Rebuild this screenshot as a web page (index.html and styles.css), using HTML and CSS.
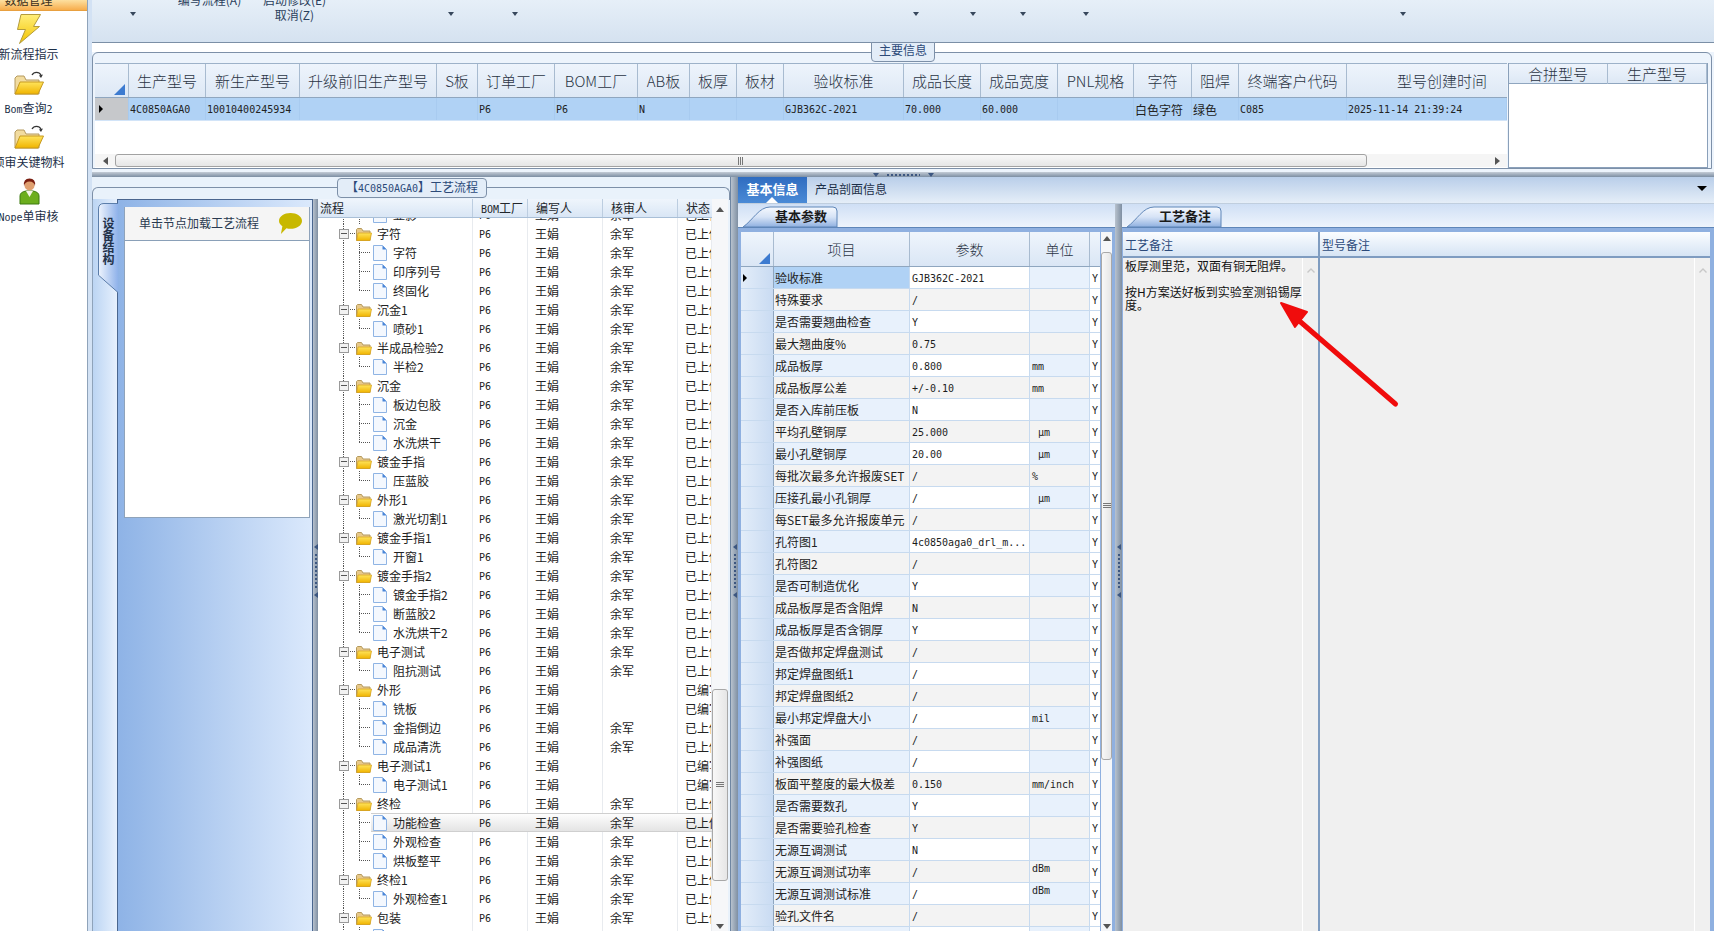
FILE: index.html
```html
<!DOCTYPE html>
<html lang="zh">
<head>
<meta charset="utf-8">
<title>工艺流程</title>
<link rel="stylesheet" href="styles.css">
</head>
<body>
<svg class="defs" aria-hidden="true">
  <defs>
    <linearGradient id="gBolt" x1="0" y1="0" x2="0" y2="1"><stop offset="0" stop-color="#ffee7a"/><stop offset="1" stop-color="#f3c400"/></linearGradient>
    <linearGradient id="gFold" x1="0" y1="0" x2="0" y2="1"><stop offset="0" stop-color="#ffe45c"/><stop offset="1" stop-color="#f0b400"/></linearGradient>
    <linearGradient id="gTab" x1="0" y1="0" x2="0" y2="1"><stop offset="0" stop-color="#f6f9fe"/><stop offset=".5" stop-color="#d6e3f6"/><stop offset="1" stop-color="#8fb0e0"/></linearGradient>
    <linearGradient id="gVtab" x1="0" y1="0" x2="1" y2="0"><stop offset="0" stop-color="#eef4fd"/><stop offset="1" stop-color="#8fb2ea"/></linearGradient>
    <symbol id="folder" viewBox="0 0 16 16"><path d="M.5 3.500V14.500H14V5H7L5.500 2.500H1.500Z" fill="#e8c98a" stroke="#b59a5e"/><path d="M2 7H15.500L14 14.500H.8Z" fill="url(#gFold)" stroke="#d9a520" stroke-width=".8"/></symbol>
    <symbol id="file" viewBox="0 0 14 16"><path d="M.5.5H9.500L13.500 4.500V15.500H.5Z" fill="#f4f8fe" stroke="#8fb4e4"/><path d="M9.500.5V4.500H13.500Z" fill="#4a86d8"/></symbol>
    <symbol id="bigfolder" viewBox="0 0 30 24"><path d="M1 7V23H25V9H12L10 5H3Z" fill="#f2dca0" stroke="#b59a5e"/><path d="M6 11H29.500L24 23H1Z" fill="url(#gFold)" stroke="#c79a20"/><path d="M18 4C20 .5 25 .5 27 4" fill="none" stroke="#333" stroke-width="1.300"/><path d="M25 4.500L29 3.500 27 7Z" fill="#333"/></symbol>
    <symbol id="tabshape" viewBox="0 0 95 21" preserveAspectRatio="none"><path d="M0 21C10 14 16 1 27 1H90Q94 1 94 5V21Z" fill="url(#gTab)" stroke="#5f86b8"/></symbol>
  </defs>
</svg>

<div class="app">
  <aside class="side">
    <div class="side-head"><span>数据管理</span></div>
    <div class="item">
      <div class="item-ic"><svg class="ic-bolt" viewBox="0 0 24 30"><path d="M4 .5H23.500L16.500 12.500H22.500L2.500 29.500 8.500 15.500H.5Z" fill="url(#gBolt)" stroke="#b39b3c"/></svg></div>
      <div class="item-t">新流程指示</div>
    </div>
    <div class="item">
      <div class="item-ic"><svg class="ic-fold"><use href="#bigfolder"/></svg></div>
      <div class="item-t"><span class="m">Bom</span>查询<span class="m">2</span></div>
    </div>
    <div class="item">
      <div class="item-ic"><svg class="ic-fold"><use href="#bigfolder"/></svg></div>
      <div class="item-t">预审关键物料</div>
    </div>
    <div class="item">
      <div class="item-ic"><svg class="ic-user" viewBox="0 0 21 27"><path d="M1 26V18Q1 14 7 13H14Q20 14 20 18V26Z" fill="#6cae1e" stroke="#3d7a10"/><path d="M7 13L10.500 19 14 13Z" fill="#f4f4e8"/><circle cx="10.500" cy="7.500" r="5" fill="#e0a070"/><path d="M5 8Q4 .5 10.500 .5T16 8Q15 3.500 10.500 3.500T5 8Z" fill="#7a1e10"/></svg></div>
      <div class="item-t"><span class="m">Nope</span>单审核</div>
    </div>
  </aside>

  <div class="frame">
    <main class="main">
      <div class="ribbon">
        <span></span><i class="tri-s"></i><span></span>
        <div class="rb-t"><div>编写流程(A)</div></div>
        <span></span>
        <div class="rb-t"><div>启动修改(E)</div><div>取消(Z)</div></div>
        <span></span><i class="tri-s"></i><span></span><i class="tri-s"></i><span></span><i class="tri-s"></i><span></span><i class="tri-s"></i><span></span><i class="tri-s"></i><span></span><i class="tri-s"></i><span></span><i class="tri-s"></i>
      </div>

      <section class="topgroup">
        <div class="grp-title">主要信息</div>
        <div class="topgrids">
          <div class="tg">
            <div class="tg-row tg-head">
              <div class="corner"><i class="corner-tri"></i></div>
              <div>生产型号</div><div>新生产型号</div><div>升级前旧生产型号</div><div>S板</div><div>订单工厂</div><div>BOM工厂</div><div>AB板</div><div>板厚</div><div>板材</div><div>验收标准</div><div>成品长度</div><div>成品宽度</div><div>PNL规格</div><div>字符</div><div>阻焊</div><div>终端客户代码</div><div class="h-last">型号创建时间</div>
            </div>
            <div class="tg-row tg-data">
              <div class="sel-gray"><i class="tri-r"></i></div>
              <div class="m">4C0850AGA0</div><div class="m">10010400245934</div><div></div><div></div><div class="m">P6</div><div class="m">P6</div><div class="m">N</div><div></div><div></div><div class="m">GJB362C-2021</div><div class="m">70.000</div><div class="m">60.000</div><div></div><div>白色字符</div><div>绿色</div><div class="m">C085</div><div class="m">2025-11-14 21:39:24</div>
            </div>
            <div class="tg-fill"></div>
            <div class="hbar">
              <div class="hb-btn"><i class="tri-l"></i></div>
              <div class="hb-thumb"><span class="grip-v"></span></div>
              <div class="hb-track"></div>
              <div class="hb-btn"><i class="tri-rg"></i></div>
            </div>
          </div>
          <div class="mg">
            <div class="mg-head"><div>合拼型号</div><div>生产型号</div></div>
          </div>
        </div>
      </section>

      <div class="hsplit"><i class="tri-d"></i><span class="dots-h"></span><i class="tri-d"></i></div>

      <div class="lower">
        <section class="leftgroup">
          <div class="gbar"><div class="gbar-title">【<span class="m">4C0850AGA0</span>】工艺流程</div></div>
          <div class="lg-body">
            <div class="vtabs">
              <div class="vtab">
                <svg class="vtab-shape" viewBox="0 0 20 91" preserveAspectRatio="none"><path d="M20 .5H6Q.5 .5 .5 6V73L20 90.500" fill="url(#gVtab)" stroke="#5a7ca8"/></svg>
                <span class="vtab-t">设备结构</span>
              </div>
            </div>
            <div class="sidepanel">
              <div class="sp-white">
                <div class="sp-head">
                  <span>单击节点加载工艺流程</span>
                  <svg class="bubble" viewBox="0 0 24 20" preserveAspectRatio="none"><path d="M12 0C18.600 0 24 3.300 24 7.500S18.600 15 12 15C10.500 15 9 14.800 7.800 14.500L2 20 3.500 12.500C1.300 11 0 9.400 0 7.500 0 3.300 5.400 0 12 0Z" fill="#c8b800"/></svg>
                </div>
              </div>
            </div>
            <div class="vsplit vs-a"><i class="tri-vl"></i><span class="dots-v"></span><i class="tri-vl"></i></div>
            <div class="tree">
              <div class="tree-main">
                <div class="th">
                  <div class="th-n">流程</div><div><span class="m">BOM</span>工厂</div><div>编写人</div><div>核审人</div><div>状态</div>
                </div>
                <div class="tb">
                  <div class="tbi">
                    <div class="tr"><div class="n k"><svg class="fi"><use href="#file"/></svg>显影</div><span class="m">P6</span><span>王娟</span><span>余军</span><span>已上传</span></div>
                    <div class="tr"><div class="n f"><i class="box"></i><svg class="fo"><use href="#folder"/></svg>字符</div><span class="m">P6</span><span>王娟</span><span>余军</span><span>已上传</span></div>
                    <div class="tr"><div class="n k"><svg class="fi"><use href="#file"/></svg>字符</div><span class="m">P6</span><span>王娟</span><span>余军</span><span>已上传</span></div>
                    <div class="tr"><div class="n k"><svg class="fi"><use href="#file"/></svg>印序列号</div><span class="m">P6</span><span>王娟</span><span>余军</span><span>已上传</span></div>
                    <div class="tr"><div class="n k l"><svg class="fi"><use href="#file"/></svg>终固化</div><span class="m">P6</span><span>王娟</span><span>余军</span><span>已上传</span></div>
                    <div class="tr"><div class="n f"><i class="box"></i><svg class="fo"><use href="#folder"/></svg>沉金1</div><span class="m">P6</span><span>王娟</span><span>余军</span><span>已上传</span></div>
                    <div class="tr"><div class="n k l"><svg class="fi"><use href="#file"/></svg>喷砂1</div><span class="m">P6</span><span>王娟</span><span>余军</span><span>已上传</span></div>
                    <div class="tr"><div class="n f"><i class="box"></i><svg class="fo"><use href="#folder"/></svg>半成品检验2</div><span class="m">P6</span><span>王娟</span><span>余军</span><span>已上传</span></div>
                    <div class="tr"><div class="n k l"><svg class="fi"><use href="#file"/></svg>半检2</div><span class="m">P6</span><span>王娟</span><span>余军</span><span>已上传</span></div>
                    <div class="tr"><div class="n f"><i class="box"></i><svg class="fo"><use href="#folder"/></svg>沉金</div><span class="m">P6</span><span>王娟</span><span>余军</span><span>已上传</span></div>
                    <div class="tr"><div class="n k"><svg class="fi"><use href="#file"/></svg>板边包胶</div><span class="m">P6</span><span>王娟</span><span>余军</span><span>已上传</span></div>
                    <div class="tr"><div class="n k"><svg class="fi"><use href="#file"/></svg>沉金</div><span class="m">P6</span><span>王娟</span><span>余军</span><span>已上传</span></div>
                    <div class="tr"><div class="n k l"><svg class="fi"><use href="#file"/></svg>水洗烘干</div><span class="m">P6</span><span>王娟</span><span>余军</span><span>已上传</span></div>
                    <div class="tr"><div class="n f"><i class="box"></i><svg class="fo"><use href="#folder"/></svg>镀金手指</div><span class="m">P6</span><span>王娟</span><span>余军</span><span>已上传</span></div>
                    <div class="tr"><div class="n k l"><svg class="fi"><use href="#file"/></svg>压蓝胶</div><span class="m">P6</span><span>王娟</span><span>余军</span><span>已上传</span></div>
                    <div class="tr"><div class="n f"><i class="box"></i><svg class="fo"><use href="#folder"/></svg>外形1</div><span class="m">P6</span><span>王娟</span><span>余军</span><span>已上传</span></div>
                    <div class="tr"><div class="n k l"><svg class="fi"><use href="#file"/></svg>激光切割1</div><span class="m">P6</span><span>王娟</span><span>余军</span><span>已上传</span></div>
                    <div class="tr"><div class="n f"><i class="box"></i><svg class="fo"><use href="#folder"/></svg>镀金手指1</div><span class="m">P6</span><span>王娟</span><span>余军</span><span>已上传</span></div>
                    <div class="tr"><div class="n k l"><svg class="fi"><use href="#file"/></svg>开窗1</div><span class="m">P6</span><span>王娟</span><span>余军</span><span>已上传</span></div>
                    <div class="tr"><div class="n f"><i class="box"></i><svg class="fo"><use href="#folder"/></svg>镀金手指2</div><span class="m">P6</span><span>王娟</span><span>余军</span><span>已上传</span></div>
                    <div class="tr"><div class="n k"><svg class="fi"><use href="#file"/></svg>镀金手指2</div><span class="m">P6</span><span>王娟</span><span>余军</span><span>已上传</span></div>
                    <div class="tr"><div class="n k"><svg class="fi"><use href="#file"/></svg>断蓝胶2</div><span class="m">P6</span><span>王娟</span><span>余军</span><span>已上传</span></div>
                    <div class="tr"><div class="n k l"><svg class="fi"><use href="#file"/></svg>水洗烘干2</div><span class="m">P6</span><span>王娟</span><span>余军</span><span>已上传</span></div>
                    <div class="tr"><div class="n f"><i class="box"></i><svg class="fo"><use href="#folder"/></svg>电子测试</div><span class="m">P6</span><span>王娟</span><span>余军</span><span>已上传</span></div>
                    <div class="tr"><div class="n k l"><svg class="fi"><use href="#file"/></svg>阻抗测试</div><span class="m">P6</span><span>王娟</span><span>余军</span><span>已上传</span></div>
                    <div class="tr"><div class="n f"><i class="box"></i><svg class="fo"><use href="#folder"/></svg>外形</div><span class="m">P6</span><span>王娟</span><span></span><span>已编写</span></div>
                    <div class="tr"><div class="n k"><svg class="fi"><use href="#file"/></svg>铣板</div><span class="m">P6</span><span>王娟</span><span></span><span>已编写</span></div>
                    <div class="tr"><div class="n k"><svg class="fi"><use href="#file"/></svg>金指倒边</div><span class="m">P6</span><span>王娟</span><span>余军</span><span>已上传</span></div>
                    <div class="tr"><div class="n k l"><svg class="fi"><use href="#file"/></svg>成品清洗</div><span class="m">P6</span><span>王娟</span><span>余军</span><span>已上传</span></div>
                    <div class="tr"><div class="n f"><i class="box"></i><svg class="fo"><use href="#folder"/></svg>电子测试1</div><span class="m">P6</span><span>王娟</span><span></span><span>已编写</span></div>
                    <div class="tr"><div class="n k l"><svg class="fi"><use href="#file"/></svg>电子测试1</div><span class="m">P6</span><span>王娟</span><span></span><span>已编写</span></div>
                    <div class="tr"><div class="n f"><i class="box"></i><svg class="fo"><use href="#folder"/></svg>终检</div><span class="m">P6</span><span>王娟</span><span>余军</span><span>已上传</span></div>
                    <div class="tr hl"><div class="n k"><svg class="fi"><use href="#file"/></svg>功能检查</div><span class="m">P6</span><span>王娟</span><span>余军</span><span>已上传</span></div>
                    <div class="tr"><div class="n k"><svg class="fi"><use href="#file"/></svg>外观检查</div><span class="m">P6</span><span>王娟</span><span>余军</span><span>已上传</span></div>
                    <div class="tr"><div class="n k l"><svg class="fi"><use href="#file"/></svg>烘板整平</div><span class="m">P6</span><span>王娟</span><span>余军</span><span>已上传</span></div>
                    <div class="tr"><div class="n f"><i class="box"></i><svg class="fo"><use href="#folder"/></svg>终检1</div><span class="m">P6</span><span>王娟</span><span>余军</span><span>已上传</span></div>
                    <div class="tr"><div class="n k l"><svg class="fi"><use href="#file"/></svg>外观检查1</div><span class="m">P6</span><span>王娟</span><span>余军</span><span>已上传</span></div>
                    <div class="tr"><div class="n f"><i class="box"></i><svg class="fo"><use href="#folder"/></svg>包装</div><span class="m">P6</span><span>王娟</span><span>余军</span><span>已上传</span></div>
                    <div class="tr"><div class="n k"><svg class="fi"><use href="#file"/></svg>包装</div><span class="m">P6</span><span>王娟</span><span>余军</span><span>已上传</span></div>
                  </div>
                </div>
              </div>
              <div class="vbar vbar-tree">
                <i class="tri-u"></i>
                <div class="vb-thumb"><span class="grip-h"></span></div>
                <i class="tri-dn"></i>
              </div>
            </div>
          </div>
        </section>

        <div class="vsplit vs-b"><i class="tri-vl"></i><span class="dots-v"></span><i class="tri-vl"></i></div>

        <section class="rightarea">
          <div class="rtabs">
            <div class="rtab-on">基本信息</div>
            <div class="rtab">产品剖面信息</div>
            <i class="tri-menu"></i>
          </div>
          <div class="rpanels">
            <div class="subpanel sp-params">
              <div class="strip"><div class="stab"><svg class="stab-shape"><use href="#tabshape"/></svg><span>基本参数</span></div></div>
              <div class="pbody pb-a">
                <div class="pgrid">
                  <div class="ph">
                    <div class="corner"><i class="corner-tri"></i></div><div>项目</div><div>参数</div><div>单位</div><div></div>
                  </div>
                  <div class="pr on"><div class="ps"><i class="tri-r"></i></div><div>验收标准</div><div class="m">GJB362C-2021</div><div></div><div class="m">Y</div></div>
                  <div class="pr"><div class="ps"></div><div>特殊要求</div><div class="m">/</div><div></div><div class="m">Y</div></div>
                  <div class="pr"><div class="ps"></div><div>是否需要翘曲检查</div><div class="m">Y</div><div></div><div class="m">Y</div></div>
                  <div class="pr"><div class="ps"></div><div>最大翘曲度%</div><div class="m">0.75</div><div></div><div class="m">Y</div></div>
                  <div class="pr"><div class="ps"></div><div>成品板厚</div><div class="m">0.800</div><div class="m">mm</div><div class="m">Y</div></div>
                  <div class="pr"><div class="ps"></div><div>成品板厚公差</div><div class="m">+/-0.10</div><div class="m">mm</div><div class="m">Y</div></div>
                  <div class="pr"><div class="ps"></div><div>是否入库前压板</div><div class="m">N</div><div></div><div class="m">Y</div></div>
                  <div class="pr"><div class="ps"></div><div>平均孔壁铜厚</div><div class="m">25.000</div><div class="m">&nbsp;μm</div><div class="m">Y</div></div>
                  <div class="pr"><div class="ps"></div><div>最小孔壁铜厚</div><div class="m">20.00</div><div class="m">&nbsp;μm</div><div class="m">Y</div></div>
                  <div class="pr"><div class="ps"></div><div>每批次最多允许报废SET</div><div class="m">/</div><div class="m">%</div><div class="m">Y</div></div>
                  <div class="pr"><div class="ps"></div><div>压接孔最小孔铜厚</div><div class="m">/</div><div class="m">&nbsp;μm</div><div class="m">Y</div></div>
                  <div class="pr"><div class="ps"></div><div>每SET最多允许报废单元</div><div class="m">/</div><div></div><div class="m">Y</div></div>
                  <div class="pr"><div class="ps"></div><div>孔符图1</div><div class="m">4c0850aga0_drl_m...</div><div></div><div class="m">Y</div></div>
                  <div class="pr"><div class="ps"></div><div>孔符图2</div><div class="m">/</div><div></div><div class="m">Y</div></div>
                  <div class="pr"><div class="ps"></div><div>是否可制造优化</div><div class="m">Y</div><div></div><div class="m">Y</div></div>
                  <div class="pr"><div class="ps"></div><div>成品板厚是否含阻焊</div><div class="m">N</div><div></div><div class="m">Y</div></div>
                  <div class="pr"><div class="ps"></div><div>成品板厚是否含铜厚</div><div class="m">Y</div><div></div><div class="m">Y</div></div>
                  <div class="pr"><div class="ps"></div><div>是否做邦定焊盘测试</div><div class="m">/</div><div></div><div class="m">Y</div></div>
                  <div class="pr"><div class="ps"></div><div>邦定焊盘图纸1</div><div class="m">/</div><div></div><div class="m">Y</div></div>
                  <div class="pr"><div class="ps"></div><div>邦定焊盘图纸2</div><div class="m">/</div><div></div><div class="m">Y</div></div>
                  <div class="pr"><div class="ps"></div><div>最小邦定焊盘大小</div><div class="m">/</div><div class="m">mil</div><div class="m">Y</div></div>
                  <div class="pr"><div class="ps"></div><div>补强面</div><div class="m">/</div><div></div><div class="m">Y</div></div>
                  <div class="pr"><div class="ps"></div><div>补强图纸</div><div class="m">/</div><div></div><div class="m">Y</div></div>
                  <div class="pr"><div class="ps"></div><div>板面平整度的最大极差</div><div class="m">0.150</div><div class="m">mm/inch</div><div class="m">Y</div></div>
                  <div class="pr"><div class="ps"></div><div>是否需要数孔</div><div class="m">Y</div><div></div><div class="m">Y</div></div>
                  <div class="pr"><div class="ps"></div><div>是否需要验孔检查</div><div class="m">Y</div><div></div><div class="m">Y</div></div>
                  <div class="pr"><div class="ps"></div><div>无源互调测试</div><div class="m">N</div><div></div><div class="m">Y</div></div>
                  <div class="pr"><div class="ps"></div><div>无源互调测试功率</div><div class="m">/</div><div class="m up">dBm</div><div class="m">Y</div></div>
                  <div class="pr"><div class="ps"></div><div>无源互调测试标准</div><div class="m">/</div><div class="m up">dBm</div><div class="m">Y</div></div>
                  <div class="pr"><div class="ps"></div><div>验孔文件名</div><div class="m">/</div><div></div><div class="m">Y</div></div>
                  <div class="pr"><div class="ps"></div><div></div><div></div><div></div><div></div></div>
                </div>
                <div class="vbar vbar-param">
                  <i class="tri-u"></i>
                  <div class="vb-thumb"><span class="grip-h"></span></div>
                  <i class="tri-dn"></i>
                </div>
              </div>
            </div>

            <div class="vsplit vs-c"><i class="tri-vl"></i><span class="dots-v"></span><i class="tri-vl"></i></div>

            <div class="subpanel sp-notes">
              <div class="strip"><div class="stab"><svg class="stab-shape"><use href="#tabshape"/></svg><span>工艺备注</span></div></div>
              <div class="pbody pb-b">
                <div class="notes">
                  <div class="note-col nc-a">
                    <div class="note-h">工艺备注</div>
                    <div class="note-b">
                      <div class="note-t">板厚测里范，双面有铜无阻焊。<br><br>按H方案送好板到实验室测铅锡厚度。</div>
                      <div class="note-s"><svg class="chev" viewBox="0 0 8 5"><path d="M.5 4.500L4 1 7.500 4.500" fill="none" stroke="#c8c8c8" stroke-width="1.400"/></svg></div>
                    </div>
                  </div>
                  <div class="note-col nc-b">
                    <div class="note-h">型号备注</div>
                    <div class="note-b">
                      <div class="note-t"></div>
                      <div class="note-s"><svg class="chev" viewBox="0 0 8 5"><path d="M.5 4.500L4 1 7.500 4.500" fill="none" stroke="#c8c8c8" stroke-width="1.400"/></svg></div>
                    </div>
                  </div>
                </div>
              </div>
            </div>
          </div>
        </section>
      </div>
    </main>
  </div>

  <svg class="annot" viewBox="0 0 1714 931" aria-hidden="true">
    <path d="M1395.500 404L1296 318" fill="none" stroke="#f00c0c" stroke-width="5" stroke-linecap="round"/>
    <path d="M1281 303L1307 312 1295 327Z" fill="#f00c0c" stroke="#f00c0c" stroke-width="2" stroke-linejoin="round"/>
  </svg>
</div>
</body>
</html>
```

FILE: styles.css
```css
* { box-sizing: border-box; }
html, body { margin: 0; padding: 0; height: 100%; overflow: hidden; }
body {
  font-family: "Noto Sans CJK SC", "Noto Sans", sans-serif;
  font-size: 12px;
  color: #1c1c1c;
  background: #d3e2f4;
}
i { display: block; font-style: normal; flex: none; }
.m { font-family: "DejaVu Sans Mono", "Liberation Mono", "Noto Sans CJK SC", monospace; font-size: 10px; }
.defs { position: absolute; width: 0; height: 0; }

.app { position: relative; display: flex; width: 1714px; height: 931px; overflow: hidden; }

/* sidebar */
.side { flex: none; width: 88px; background: #fff; border-right: 1px solid #8fa3ba; overflow: hidden; }
.side-head {
  height: 11px; overflow: hidden; text-align: center; width: 87px;
  background: linear-gradient(#fde0a0, #f7ad4c);
  border-bottom: 1px solid #e8a040; padding-right: 30px;
}
.side-head span { display: block; line-height: 14px; margin-top: -7px; color: #3b3020; }
.item { width: 57px; height: 54px; display: flex; flex-direction: column; align-items: center; }
.item-ic { height: 36px; display: flex; align-items: center; justify-content: center; }
.item-t { height: 14px; line-height: 14px; white-space: nowrap; color: #1c2f48; }
.ic-bolt { width: 24px; height: 30px; margin-left: 1px; }
.ic-fold { width: 30px; height: 24px; }
.ic-user { width: 21px; height: 27px; margin-left: 1px; }

.frame { flex: none; width: 1626px; padding-left: 4px; background: #d3e2f4; }
.main { display: flex; flex-direction: column; width: 1622px; height: 931px; }

/* ribbon */
.ribbon {
  flex: none; height: 43px; overflow: hidden;
  display: grid;
  grid-template-columns: 38px 7px 39px 67px 19px 65px 121px 7px 57px 7px 394px 7px 50px 7px 43px 7px 56px 7px 310px 7px;
  background: linear-gradient(#e6eff8, #d5e2f0);
  border-bottom: 1px solid #7b8fa6;
}
.tri-s { width: 0; height: 0; margin-top: 12px; border: 3.5px solid transparent; border-top: 4px solid #37475c; border-bottom: 0; }
.rb-t { margin-top: -8px; text-align: center; line-height: 15px; color: #2b3f5c; white-space: nowrap; }

/* top group */
.topgroup { flex: none; position: relative; height: 129px; padding: 20px 0 0 3px; background: linear-gradient(#fff 0 9px, #edf4fc 9px); }
.topgroup::before {
  content: ""; position: absolute; left: 0; right: 2px; top: 9px; bottom: 3px;
  border: 1px solid #7d90a8; border-radius: 6px 6px 0 0;
}
.grp-title {
  position: absolute; left: 779px; top: -1px; width: 64px; height: 20px; line-height: 14px; text-align: center;
  color: #2c4a78; background: #e3edf8; border: 1px solid #7d90a8; border-radius: 0 0 4px 4px;
}
.topgrids { position: relative; display: flex; gap: 1px; height: 105px; }
.tg { width: 1412px; height: 105px; background: #fff; display: flex; flex-direction: column; }
.tg-row {
  display: grid;
  grid-template-columns: 34px 77px 94px 137px 41px 77px 83px 52px 47px 47px 120px 77px 77px 76px 58px 47px 108px 160px;
}
.tg-head { height: 35px; background: linear-gradient(#eef4fc, #dde8f5); border-top: 1px solid #9db2c9; border-bottom: 1px solid #8fa6bf; }
.tg-head > div {
  border-right: 1px solid #a8bbd0; text-align: center; font-size: 15px; line-height: 34px; color: #2a3444; white-space: nowrap; overflow: hidden;
  font-weight: 300;
}
.tg-head .h-last { padding-left: 30px; border-right: 0; }
.tg-head .corner, .ph .corner { position: relative; }
.corner-tri { position: absolute; right: 3px; bottom: 2px; width: 0; height: 0; border-left: 11px solid transparent; border-bottom: 11px solid #3d7bd0; }
.tg-data { height: 23px; background: #b0d2f5; line-height: 24px; border-bottom: 1px solid #d2e4f8; }
.tg-data > div { padding-left: 1px; border-right: 1px solid #a8cbf0; white-space: nowrap; overflow: hidden; color: #222; }
.sel-gray { background: #c6c8cb; display: flex; align-items: center; padding-left: 3px !important; }
.tri-r { width: 0; height: 0; border: 4px solid transparent; border-left: 4px solid #000; border-right: 0; margin-left: 1px; }
.tg-fill { flex: 1; }
.hbar { flex: none; height: 13px; margin-bottom: 1px; display: flex; background: #f5f5f5; align-items: center; }
.hb-btn { flex: none; width: 20px; height: 13px; display: flex; align-items: center; justify-content: center; }
.tri-l { width: 0; height: 0; border: 4px solid transparent; border-right: 5px solid #555; border-left: 0; }
.tri-rg { width: 0; height: 0; border: 4px solid transparent; border-left: 5px solid #555; border-right: 0; }
.hb-thumb {
  flex: none; width: 1252px; height: 13px; display: flex; align-items: center; justify-content: center;
  background: linear-gradient(#f8f8f8, #e6e6e6); border: 1px solid #a2a2a2; border-radius: 3px;
}
.grip-v { width: 6px; height: 8px; background: repeating-linear-gradient(90deg, #777 0 1px, transparent 1px 2px); }
.hb-track { flex: 1; }
.mg { width: 200px; height: 105px; background: #fff; border-right: 1px solid #8aa0ba; border-bottom: 1px solid #8aa0ba; border-left: 1px solid #8aa0ba; }
.mg-head { height: 21px; display: grid; grid-template-columns: 99px 1fr; background: linear-gradient(#eef4fc, #dde8f5); border-top: 1px solid #9db2c9; border-bottom: 1px solid #8fa6bf; }
.mg-head > div { text-align: center; font-size: 15px; line-height: 20px; font-weight: 300; color: #2a3444; border-right: 1px solid #a8bbd0; }

/* horizontal splitter */
.hsplit {
  flex: none; height: 5px; display: flex; align-items: center; justify-content: center; gap: 4px;
  background: linear-gradient(#c4ccd6, #7c8ea3);
}
.tri-d { width: 0; height: 0; border: 3px solid transparent; border-top: 4px solid #3c5680; border-bottom: 0; }
.dots-h { width: 33px; height: 2px; background: repeating-linear-gradient(90deg, #3c5680 0 2px, transparent 2px 4px); margin: 0 4px; }

.lower { flex: 1; display: flex; min-height: 0; }

/* lower left */
.leftgroup { flex: none; width: 639px; display: flex; flex-direction: column; background: #e9f2fb; border-right: 1px solid #6f86a2; }
.gbar { position: relative; flex: none; height: 22px; padding: 1px 0 0 245px; }
.gbar::before { content: ""; position: absolute; left: 0; right: 0; top: 10px; height: 12px; border: 1px solid #7d90a8; border-bottom: 0; border-radius: 6px 6px 0 0; }
.gbar-title {
  position: relative; width: 150px; height: 20px; line-height: 15px; text-align: center; white-space: nowrap;
  color: #2c4a78; background: #e3edf8; border: 1px solid #7d90a8; border-radius: 4px;
}
.lg-body { flex: 1; display: flex; min-height: 0; }
.vtabs { flex: none; width: 25px; padding: 4px 0 0 5px; background: linear-gradient(90deg, #bcd5f3, #e6f0fd); border-left: 1px solid #8fa3ba; }
.vtab { position: relative; width: 20px; height: 90px; }
.vtab-shape { display: block; width: 20px; height: 90px; }
.vtab-t {
  position: absolute; left: 3px; top: 14px; width: 14px;
  writing-mode: vertical-rl; font-weight: 700; font-size: 12px; line-height: 14px; letter-spacing: .3px; color: #22324a;
}
.sidepanel {
  flex: none; width: 196px; padding: 7px 2px 0 6px;
  background: linear-gradient(90deg, #8eb3e6, #dbe9fc);
  border: 1px solid #4a668f; border-bottom: 0;
}
.sp-white { height: 311px; background: #fff; border: 1px solid #8fa3ba; border-top: 0; }
.sp-head { display: flex; justify-content: space-between; align-items: center; height: 34px; padding: 0 7px 0 14px; background: #f5f5f5; border-bottom: 1px solid #8aa0b8; color: #2a3a50; }
.sp-head span { margin-top: -3px; }
.bubble { width: 23px; height: 21px; }

.vsplit { flex: none; display: flex; flex-direction: column; align-items: center; background: linear-gradient(90deg, #b8c2ce, #7f8fa2); }
.vs-a { width: 5px; padding-top: 345px; }
.vs-b { width: 7px; padding-top: 367px; }
.vs-c { width: 7px; padding-top: 340px; }
.tri-vl { width: 0; height: 0; border: 3px solid transparent; border-right: 4px solid #3c5680; border-left: 0; }
.dots-v { width: 2px; height: 34px; margin: 4px 0; background: repeating-linear-gradient(#3c5680 0 2px, transparent 2px 4px); }

/* tree */
.tree { flex: none; width: 410px; display: flex; background: #fff; }
.tree-main { flex: none; width: 394px; display: flex; flex-direction: column; min-height: 0; overflow: hidden; }
.th, .tr { display: grid; grid-template-columns: 155px 55px 75px 75px 34px; }
.th { flex: none; height: 19px; background: linear-gradient(#eff5fc, #d9e6f5); border-bottom: 1px solid #a9bfd7; }
.th > div { line-height: 18px; padding-left: 8px; border-right: 1px solid #bccde0; overflow: hidden; white-space: nowrap; color: #22262c; }
.th .th-n { padding-left: 2px; }
.th > div:last-child { border-right: 0; }
.tb { flex: 1; overflow: hidden; }
.tbi { margin-top: -13px; }
.tr { height: 19px; line-height: 19px; color: #222; }
.tr > span { padding-left: 7px; border-right: 1px solid #e8ebef; overflow: hidden; white-space: nowrap; }
.tr > span.m { padding-left: 6px; line-height: 21px; }
.n {
  display: flex; align-items: center; white-space: nowrap; overflow: hidden; border-right: 1px solid #e8ebef;
  --dv: repeating-linear-gradient(#555 0 1px, transparent 1px 2px);
  --dh: repeating-linear-gradient(90deg, #555 0 1px, transparent 1px 2px);
}
.n.f {
  padding-left: 21px;
  background: var(--dh) 30px 9px / 8px 1px no-repeat, var(--dv) 25px 0 / 1px 100% no-repeat;
}
.n.k {
  padding-left: 55px;
  background: var(--dh) 41px 9px / 12px 1px no-repeat, var(--dv) 41px 0 / 1px 100% no-repeat, var(--dv) 25px 0 / 1px 100% no-repeat;
}
.n.k.l {
  background: var(--dh) 41px 9px / 12px 1px no-repeat, var(--dv) 41px 0 / 1px 10px no-repeat, var(--dv) 25px 0 / 1px 100% no-repeat;
}
.box {
  position: relative; width: 10px; height: 10px; margin-right: 7px;
  background: linear-gradient(#555, #555) center / 6px 1px no-repeat, #f2f2f2; border: 1px solid #9a9a9a;
}
.fo { flex: none; width: 16px; height: 16px; margin-right: 5px; }
.fi { flex: none; width: 14px; height: 16px; margin-right: 6px; }
.tr.hl > span { background: linear-gradient(#cfcfcf 0 1px, #fdfdfd 1px, #e4e4e4 18px, #cfcfcf 18px); border-right: 0; }
.tr.hl .n.k {
  background: linear-gradient(#cfcfcf 0 1px, #fdfdfd 1px, #e4e4e4 18px, #cfcfcf 18px) 53px 0 / 102px 100% no-repeat,
    var(--dh) 41px 9px / 12px 1px no-repeat, var(--dv) 41px 0 / 1px 100% no-repeat, var(--dv) 25px 0 / 1px 100% no-repeat;
  border-right: 0;
}

.vbar { flex: none; display: flex; flex-direction: column; align-items: center; background: #f6f7f9; min-height: 0; }
.vbar-tree { width: 16px; padding-top: 8px; }
.vbar-param { width: 11px; padding-top: 4px; }
.tri-u { width: 0; height: 0; border: 4px solid transparent; border-bottom: 5px solid #555; border-top: 0; }
.tri-dn { width: 0; height: 0; border: 4px solid transparent; border-top: 5px solid #555; border-bottom: 0; margin-top: auto; margin-bottom: 2px; }
.vb-thumb {
  width: 100%; display: flex; align-items: center; justify-content: center;
  background: linear-gradient(90deg, #f8f8f8, #e6e6e6); border: 1px solid #a8a8a8; border-radius: 3px;
}
.vbar-tree .vb-thumb { height: 192px; margin-top: 477px; padding-top: 0; }
.vbar-param .vb-thumb { height: 508px; margin-top: 11px; }
.grip-h { width: 8px; height: 6px; background: repeating-linear-gradient(#777 0 1px, transparent 1px 2px); }

/* lower right */
.rightarea { flex: 1; min-width: 0; display: flex; flex-direction: column; }
.rtabs { position: relative; flex: none; height: 27px; display: flex; background: linear-gradient(#b9cee9, #e5eef8); border-bottom: 1px solid #c0cede; }
.rtab-on {
  position: relative; width: 69px; height: 26px; line-height: 24px; text-align: center; font-size: 13px; font-weight: 700; color: #fff;
  background: linear-gradient(#2f6cc0, #4a8ad6);
}
.rtab-on::after { content: ""; position: absolute; left: 28px; bottom: 0; border: 6px solid transparent; border-bottom: 6px solid #fff; border-top: 0; }
.rtab { padding-left: 8px; line-height: 24px; font-size: 12px; color: #1c2f48; }
.tri-menu { position: absolute; right: 7px; top: 9px; width: 0; height: 0; border: 5px solid transparent; border-top: 5px solid #000; border-bottom: 0; }
.rpanels { flex: 1; display: flex; min-height: 0; }
.subpanel { display: flex; flex-direction: column; min-height: 0; overflow: hidden; }
.sp-params { flex: none; width: 377px; }
.sp-notes { flex: 1; min-width: 0; }
.strip { flex: none; height: 23px; padding: 2px 0 0 5px; background: linear-gradient(#cfdff5, #eef4fc); }
.stab { position: relative; width: 95px; height: 21px; padding-left: 32px; font-size: 13px; line-height: 20px; font-weight: 700; color: #1a1a1a; }
.stab-shape { position: absolute; left: 0; top: 0; width: 95px; height: 21px; }
.stab span { position: relative; }
.pbody { flex: 1; display: flex; min-height: 0; background: #8fb0e0; border-top: 1px solid #5f86b8; overflow: hidden; }
.pb-a { padding: 4px 3px 0 3px; }
.pb-b { padding: 4px 4px 0 1px; }
.pgrid { flex: none; width: 359px; margin-right: 1px; background: #fff; overflow: hidden; }
.ph, .pr { display: grid; grid-template-columns: 33px 136px 120px 60px 10px; }
.ph { height: 35px; background: linear-gradient(#eff5fc, #dae6f5); border-bottom: 1px solid #8fa6bf; }
.ph > div { border-right: 1px solid #a8bbd0; text-align: center; font-size: 14px; line-height: 34px; color: #2a3444; font-weight: 300; }
.ph > div:last-child { border-right: 0; }
.pr { height: 22px; line-height: 22px; border-bottom: 1px solid #c7daef; }
.pr > div { padding-left: 2px; border-right: 1px solid #c7daef; overflow: hidden; white-space: nowrap; }
.pr > div.m { line-height: 24px; }
.pr > div:nth-child(2) { padding-left: 1px; color: #222; background: #e8f1fc; }
.pr > div:nth-child(3) { background: #fff; }
.pr > div:nth-child(4) { background: #e8f1fc; }
.pr > div:nth-child(5) { background: #fff; border-right: 0; }
.pr:nth-child(odd) > div:nth-child(2),
.pr:nth-child(odd) > div:nth-child(3),
.pr:nth-child(odd) > div:nth-child(4) { background: #f3f3f3; }
.pr.on > div:nth-child(2) { background: #b0d2f5; }
.pr > .ps { padding: 0; background: linear-gradient(90deg, #e3edf9, #c9dbf2); display: flex; align-items: center; border-right: 1px solid #8fa6bf; }
.ps .tri-r { margin-left: 2px; margin-right: 0; }
.pr > .up.m { line-height: 16px; }
.notes { flex: 1; display: flex; min-width: 0; }
.note-col { display: flex; flex-direction: column; min-width: 0; }
.nc-a { flex: none; width: 197px; border-right: 2px solid #7f9cc0; }
.nc-b { flex: 1; }
.note-h {
  flex: none; height: 26px; line-height: 25px; padding-left: 2px; color: #2c4a7a;
  background: linear-gradient(#fbfdff, #d6e4f4); border-bottom: 2px solid #7f9cc0;
}
.note-b { flex: 1; display: flex; background: #f0f0f0; min-height: 0; }
.note-t { flex: 1; min-width: 0; padding: 1px 0 0 2px; line-height: 13px; color: #111; }
.note-s { flex: none; width: 16px; padding: 10px 0 0 4px; border-left: 1px solid #fff; }
.chev { display: block; width: 8px; height: 5px; }

.annot { position: absolute; left: 0; top: 0; width: 1714px; height: 931px; pointer-events: none; }
```
